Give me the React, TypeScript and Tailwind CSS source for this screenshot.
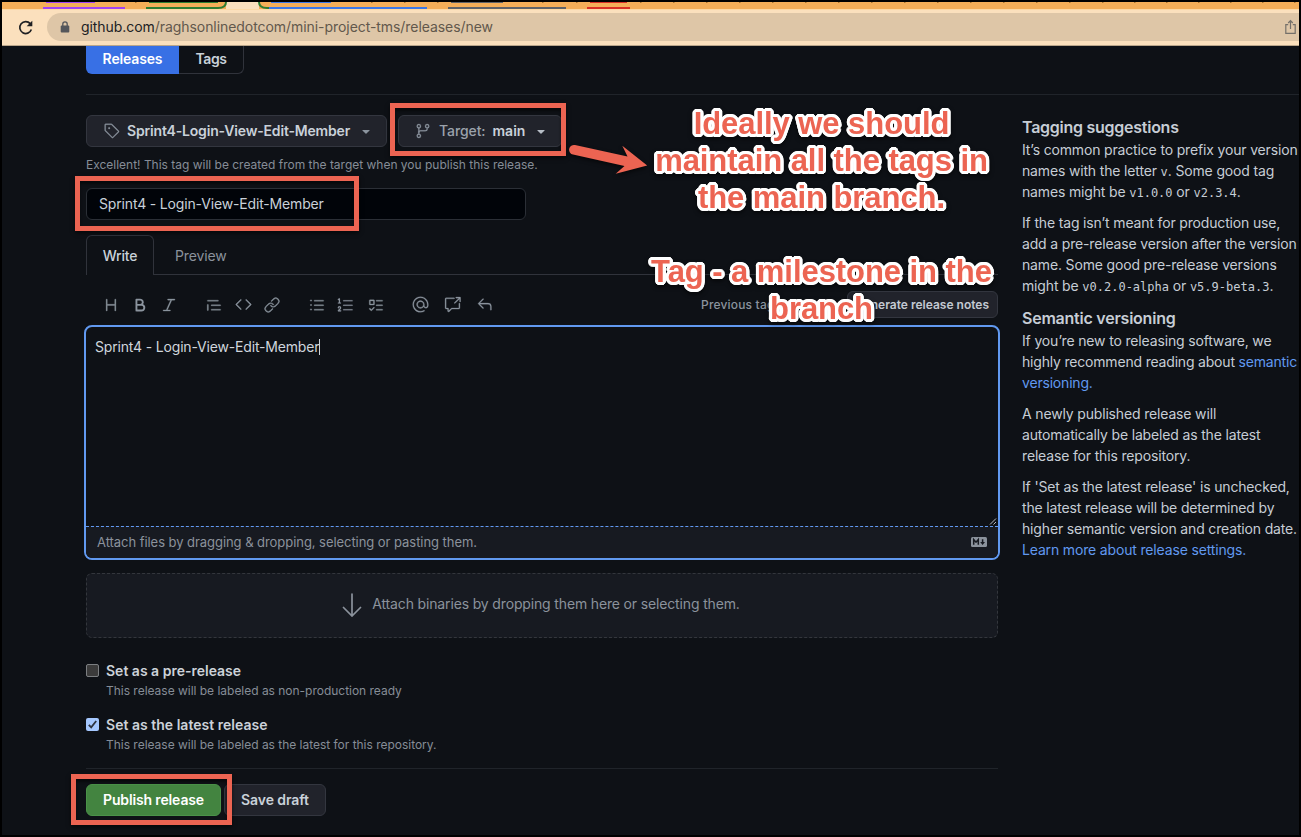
import type { ReactNode } from "react";
import {
  GoTag, GoGitBranch, GoHeading, GoBold, GoItalic, GoQuote, GoCode, GoLink,
  GoListUnordered, GoListOrdered, GoTasklist, GoMention, GoCrossReference, GoReply, GoTriangleDown,
} from "react-icons/go";

function TabStrip() {
  return (
    <svg className="block h-[7px] w-[1297px] shrink-0" viewBox="2 2 1297 7" aria-hidden="true">
      <rect x="2" y="2" width="1297" height="7" fill="#f4ae58" />
      <rect x="226" y="2" width="33" height="7" fill="#fbe0bd" />
      <g fill="#a9742f">
        {[135, 371, 404, 437, 542, 576, 640, 673, 706, 739, 772, 805, 838, 871, 904, 937, 970, 1003, 1036, 1069, 1102, 1134, 1166, 1198, 1230, 1262, 1294].map((x) => (
          <rect key={x} x={x} y="2" width="1.5" height="1" />
        ))}
      </g>
      <rect x="46" y="2" width="49" height="1" fill="#a142f4" />
      <rect x="43" y="7" width="82" height="2" fill="#a142f4" />
      <rect x="149" y="2" width="69" height="1" fill="#2e7d32" />
      <path d="M146 8H218Q226 8 226 2" fill="none" stroke="#2e7d32" strokeWidth="2" />
      <path d="M259 2Q259 8 267 8H272" fill="none" stroke="#2e7d32" strokeWidth="2" />
      <rect x="271" y="2" width="60" height="1" fill="#3b78e7" />
      <rect x="269" y="7" width="158" height="2" fill="#3b78e7" />
      <rect x="451" y="2" width="52" height="1" fill="#5f6368" />
      <rect x="448" y="7" width="118" height="2" fill="#5f6368" />
      <rect x="590" y="2" width="37" height="1" fill="#d93025" />
      <rect x="587" y="7" width="43" height="2" fill="#d93025" />
    </svg>
  );
}

function AddressBar() {
  return (
    <div className="flex h-[37px] shrink-0 items-center border-t border-b border-t-[#fdd9a5] border-b-[#b9a58a] bg-[#fbe0bd] pb-px">
      <svg className="ml-[15px] size-[17px] shrink-0" viewBox="0 0 18 18" fill="none" stroke="#1f2023" strokeWidth="1.8">
        <path d="M15.2 11.2A6.3 6.3 0 1 1 14 4.9L15 6" />
        <path d="M16.2 1.8V7.8H10.2Z" fill="#1f2023" stroke="none" />
      </svg>
      <div className="ml-[13px] flex h-7 flex-1 items-center rounded-l-full bg-[#dec6a7] pl-[13px]">
        <svg className="h-3 w-[10px]" viewBox="0 0 10 12">
          <rect x="0.7" y="4.4" width="8.6" height="7" rx="1" fill="#54565b" />
          <path d="M2.8 5V3a2.2 2.2 0 0 1 4.4 0v2" fill="none" stroke="#54565b" strokeWidth="1.3" />
        </svg>
        <span className="ml-[11px] pb-px whitespace-nowrap text-[14px] tracking-[-0.061px] text-[#62584c]">
          <span className="text-[#202124]">github.com</span>/raghsonlinedotcom/mini-project-tms/releases/new
        </span>
        <svg className="mr-[3px] ml-auto h-4 w-[11px]" viewBox="0 0 11 16" fill="none" stroke="#74706a" strokeWidth="1.2">
          <path d="M3.2 5.6H0.8V14.4H10.2V5.6H7.8M5.5 10V1.8M3.2 4L5.5 1.7L7.8 4" />
        </svg>
      </div>
    </div>
  );
}

function ToolIcon({ children, className }: { children: ReactNode; className: string }) {
  return <button className={`flex size-4 shrink-0 items-center justify-center ${className}`}>{children}</button>;
}

function Toolbar() {
  return (
    <div className="mt-4 flex h-[27px] items-center pl-[17px] text-[#8b949e] [&_button_svg]:shrink-0">
      <ToolIcon className=""><GoHeading size={18} strokeWidth={0.4} /></ToolIcon>
      <ToolIcon className="ml-[13px]"><GoBold size={18} /></ToolIcon>
      <ToolIcon className="ml-[13px]"><GoItalic size={18} strokeWidth={0.4} /></ToolIcon>
      <ToolIcon className="ml-[29px]"><GoQuote size={18} strokeWidth={0.4} /></ToolIcon>
      <ToolIcon className="ml-[13px]"><GoCode size={17} strokeWidth={0.4} /></ToolIcon>
      <ToolIcon className="ml-[13px]"><GoLink size={16} strokeWidth={0.5} /></ToolIcon>
      <ToolIcon className="ml-[29px]"><GoListUnordered size={18} strokeWidth={0.4} /></ToolIcon>
      <ToolIcon className="ml-[13px]"><GoListOrdered size={18} strokeWidth={0.2} /></ToolIcon>
      <ToolIcon className="ml-[14px]"><GoTasklist size={18} strokeWidth={0.4} /></ToolIcon>
      <ToolIcon className="ml-[28px]"><GoMention size={17} strokeWidth={0.4} /></ToolIcon>
      <ToolIcon className="ml-[16px]"><GoCrossReference size={17} strokeWidth={0.4} /></ToolIcon>
      <ToolIcon className="ml-[16px]"><GoReply size={17} strokeWidth={0.4} /></ToolIcon>
      <span className="ml-[209px] w-[146px] overflow-hidden whitespace-nowrap text-[12px] font-medium tracking-[0.18px]">Previous tag: Auto</span>
      <button className="flex h-[27px] flex-1 items-center justify-end whitespace-nowrap rounded-md border border-[#33363f] bg-[#21232b] pr-[8px] text-[12px] font-semibold text-[#c3c9d2]">
        Generate release notes
      </button>
    </div>
  );
}

function Editor() {
  return (
    <div className="-mx-[2px] mt-[7px] flex h-[235px] flex-col overflow-hidden rounded-lg border-2 border-[#6199f0]">
      <div className="flex h-[199px] shrink-0 items-start justify-between pt-[9px] pl-[9px]">
        <div className="flex items-center text-[#d0d6dd]">
          <span className="tracking-[-0.17px]">Sprint4 - Login-View-Edit-Member</span>
          <span className="h-4 w-px bg-[#c9d1d9]" />
        </div>
        <svg className="size-[9px] shrink-0 self-end" viewBox="0 0 9 9" stroke="#b8bcc2" strokeWidth="1">
          <path d="M1 7.5L7 1.5M4.5 7.5L7 5" />
        </svg>
      </div>
      <div className="flex flex-1 items-center justify-between border-t border-dashed border-[#6199f0] bg-[#171a21] pr-[11px] pl-[11px] text-[13px] tracking-[-0.053px] text-[#8b929c]">
        <span>Attach files by dragging &amp; dropping, selecting or pasting them.</span>
        <svg className="-mt-px h-[10px] w-4" viewBox="0 0 16 10">
          <rect width="16" height="10" rx="1.5" fill="#8b929c" />
          <path d="M2.7 7.8V2.6L5 5.2L7.3 2.6V7.8M11.6 2.2V5.6" fill="none" stroke="#171a21" strokeWidth="1.5" />
          <path d="M9.2 5H14L11.6 8Z" fill="#171a21" />
        </svg>
      </div>
    </div>
  );
}

function Option({ checked, title, titleClass, note }: { checked: boolean; title: string; titleClass: string; note: string }) {
  return (
    <div className="flex gap-[7px]">
      {checked ? (
        <svg className="mt-1 size-[13px] shrink-0" viewBox="0 0 13 13">
          <rect width="13" height="13" rx="2" fill="#a5c8ff" />
          <path d="M2.8 6.8L5.2 9.4L10.2 3" fill="none" stroke="#2d3440" strokeWidth="1.8" />
        </svg>
      ) : (
        <span className="mt-1 size-[13px] shrink-0 rounded-[2px] border border-[#7c7f82] bg-[#3b3b3b]" />
      )}
      <div>
        <div className={`h-5 leading-[21px] font-semibold text-[#ccd2d9] ${titleClass}`}>{title}</div>
        <div className="h-5 text-[12px] leading-[21px] tracking-[-0.02px] text-[#868d97]">{note}</div>
      </div>
    </div>
  );
}

function Code({ children }: { children: ReactNode }) {
  return <code className="font-['DejaVu_Sans_Mono',monospace] text-[12px] leading-none tracking-normal">{children}</code>;
}

function Sidebar() {
  return (
    <aside className="ml-6 flex w-[277px] flex-col pt-[21px] leading-[21px] tracking-[-0.16px] text-[#c6cdd5]">
      <h3 className="h-[23px] text-[16px] leading-[22px] font-semibold tracking-[-0.26px]">Tagging suggestions</h3>
      <p>It’s common practice to prefix your version<br />names with the letter <Code>v</Code>. Some good tag<br />names might be <Code>v1.0.0</Code> or <Code>v2.3.4</Code>.</p>
      <p className="mt-[10px]">If the tag isn’t meant for production use,<br />add a pre-release version after the version<br />name. Some good pre-release versions<br />might be <Code>v0.2.0-alpha</Code> or <Code>v5.9-beta.3</Code>.</p>
      <h3 className="mt-[11px] h-[23px] text-[16px] leading-[22px] font-semibold tracking-[-0.23px]">Semantic versioning</h3>
      <p>If you’re new to releasing software, we<br /><span className="tracking-[-0.19px]">highly recommend reading about <a className="text-[#6199f0]">semantic<br />versioning.</a></span></p>
      <p className="mt-[10px]">A newly published release will<br />automatically be labeled as the latest<br />release for this repository.</p>
      <p className="mt-[10px]">If 'Set as the latest release' is unchecked,<br />the latest release will be determined by<br />higher semantic version and creation date.<br /><a className="text-[#6199f0]">Learn more about release settings.</a></p>
    </aside>
  );
}

function Callout({ className, lines }: { className: string; lines: string[] }) {
  return (
    <div className={`absolute flex flex-col items-center whitespace-nowrap font-['Liberation_Sans',sans-serif] text-[31px] leading-[37px] font-bold tracking-[-0.06px] text-[#ec6452] [text-shadow:3.2px_0_white,2.96px_1.22px_white,2.26px_2.26px_white,1.22px_2.96px_white,0_3.2px_white,-1.22px_2.96px_white,-2.26px_2.26px_white,-2.96px_1.22px_white,-3.2px_0_white,-2.96px_-1.22px_white,-2.26px_-2.26px_white,-1.22px_-2.96px_white,0_-3.2px_white,1.22px_-2.96px_white,2.26px_-2.26px_white,2.96px_-1.22px_white,1.5px_0_white,-1.5px_0_white,0_1.5px_white,0_-1.5px_white] [filter:drop-shadow(0_2px_2px_rgba(0,0,0,0.6))] ${className}`}>
      {lines.map((l) => <span key={l}>{l}</span>)}
    </div>
  );
}

function Annotations() {
  return (
    <>
      <div className="absolute top-[103px] left-[390px] h-[53px] w-[176px] border-[5px] border-[#ec6452] shadow-[0_2px_4px_rgba(0,0,0,0.6),inset_0_3px_3px_rgba(0,0,0,0.5)]" />
      <div className="absolute top-[176px] left-[75px] h-[55px] w-[284px] border-[5px] border-[#ec6452] shadow-[0_2px_4px_rgba(0,0,0,0.6),inset_0_3px_3px_rgba(0,0,0,0.5)]" />
      <div className="absolute top-[774px] left-[71px] h-[51px] w-[161px] border-[5px] border-[#ec6452] shadow-[0_2px_4px_rgba(0,0,0,0.6),inset_0_3px_3px_rgba(0,0,0,0.5)]" />
      <svg className="absolute top-[140px] left-[565px] h-[40px] w-[90px] [filter:drop-shadow(0_2px_2px_rgba(0,0,0,0.6))]" viewBox="565 140 90 40">
        <path d="M575 145L627.5 156.5L622.3 145.8L647.2 165.6L615.7 173.8L624.5 166L573 154.6A4.9 4.9 0 0 1 575 145Z" fill="#ec6452" />
      </svg>
      <Callout className="top-[105px] left-[655px] w-[333px]" lines={["Ideally we should", "maintain all the tags in", "the main branch."]} />
      <Callout className="top-[253px] left-[651px] w-[341px]" lines={["Tag - a milestone in the", "branch"]} />
    </>
  );
}

export default function App() {
  return (
    <div className="relative flex h-[837px] w-[1301px] flex-col overflow-hidden border-2 border-black bg-[#0e1116] font-['Inter',sans-serif] text-[14px] leading-[21px] text-[#c9d1d9]">
      <TabStrip />
      <AddressBar />
      <div className="flex min-h-0 flex-1 flex-col pl-[84px]">
        <div className="flex h-[28px] w-[158px] shrink-0 font-semibold">
          <div className="flex w-[93px] items-start justify-center rounded-bl-md bg-[#3870e5] pt-[2px] tracking-[-0.15px] text-white">Releases</div>
          <div className="flex flex-1 items-start justify-center rounded-br-md border-r border-b border-[#30333b] pt-[2px] tracking-[-0.43px]">Tags</div>
        </div>
        <div className="mt-5 h-px shrink-0 bg-[#20242a]" />
        <div className="flex">
          <main className="flex w-[912px] flex-col pt-5">
            <div className="flex h-8 gap-[11px]">
              <button className="flex h-8 w-[301px] items-center rounded-md border border-[#33363f] bg-[#21232b] pb-px pl-[17px] font-semibold">
                <GoTag size={16} strokeWidth={0.4} className="text-[#8b949e]" />
                <span className="ml-[7px] tracking-[-0.175px]">Sprint4-Login-View-Edit-Member</span>
                <GoTriangleDown size={14} className="mt-0.5 ml-[9px] text-[#8b949e]" />
              </button>
              <button className="flex h-8 w-[164px] items-center rounded-md border border-[#33363f] bg-[#21232b] pb-px pl-4 font-semibold">
                <GoGitBranch size={16} strokeWidth={0.4} className="text-[#8b949e]" />
                <span className="ml-[8px] font-medium tracking-[-0.09px] text-[#9ba2ab]">Target:</span>
                <span className="ml-[7px]">main</span>
                <GoTriangleDown size={14} className="mt-0.5 ml-[9px] text-[#b6bdc6]" />
              </button>
            </div>
            <p className="mt-[9px] h-[18px] whitespace-nowrap text-[12px] leading-[18px] tracking-[-0.01px] text-[#868d97]">Excellent! This tag will be created from the target when you publish this release.</p>
            <div className="mt-[14px] flex h-8 w-[440px] items-center rounded-md border border-[#2b2f36] bg-[#010409] pb-px pl-3 tracking-[-0.16px]">Sprint4 - Login-View-Edit-Member</div>
            <div className="mt-[15px] flex h-10">
              <div className="flex w-[68px] items-center justify-center rounded-t-md border border-b-0 border-[#30333b] font-medium tracking-[-0.2px]">Write</div>
              <div className="flex flex-1 items-center border-b border-[#30333b] pt-[2px] pl-[21px] tracking-[-0.12px] text-[#8b929c]">Preview</div>
            </div>
            <Toolbar />
            <Editor />
            <div className="mt-[13px] flex h-[65px] items-center justify-center rounded-md border border-dashed border-[#33363c] bg-[#171a21] pr-0.5 text-[#8b929c]">
              <svg className="-mt-px h-6 w-5" viewBox="0 0 20 24" fill="none" stroke="#8b929c" strokeWidth="1.7" strokeLinecap="round">
                <path d="M10 1V23M1.5 14.5L10 23L18.5 14.5" />
              </svg>
              <span className="-mt-[4px] ml-[10px] tracking-[-0.15px]">Attach binaries by dropping them here or selecting them.</span>
            </div>
            <div className="mt-[22px] flex flex-col gap-[14px]">
              <Option checked={false} title="Set as a pre-release" titleClass="" note="This release will be labeled as non-production ready" />
              <Option checked title="Set as the latest release" titleClass="tracking-[0.02px]" note="This release will be labeled as the latest for this repository." />
            </div>
            <div className="mt-[14px] h-px bg-[#20242a]" />
            <div className="mt-[15px] flex h-8 gap-[3px] font-semibold">
              <button className="w-[135px] rounded-md border border-[#4b9249] bg-[#438440] pb-0.5 tracking-[-0.14px] text-white">Publish release</button>
              <button className="w-[102px] rounded-md border border-[#33363f] bg-[#21232b] pb-0.5 tracking-[-0.08px]">Save draft</button>
            </div>
          </main>
          <Sidebar />
        </div>
      </div>
      <div className="absolute top-[-2px] left-[-2px]"><Annotations /></div>
    </div>
  );
}
